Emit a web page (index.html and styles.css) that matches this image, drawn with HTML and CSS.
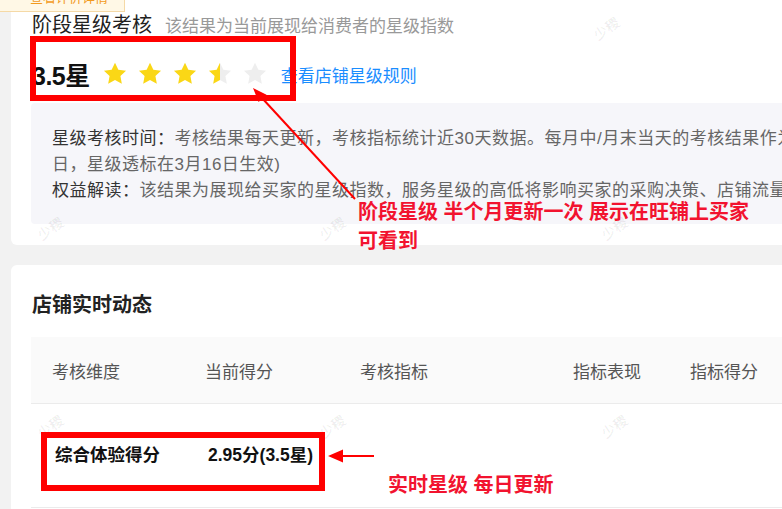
FILE: index.html
```html
<!doctype html>
<html lang="zh-CN">

<head>
    <meta charset="utf-8">
    <title>店铺星级</title>
    <meta name="viewport" content="width=device-width, initial-scale=1">
    <link rel="stylesheet" href="styles.css">
</head>

<body>
    <div class="page">
        <div class="tag">查看评价详情</div>

        <section class="card card--stage">
            <div class="stage-head">
                <h2>阶段星级考核</h2>
                <span class="stage-head__sub">该结果为当前展现给消费者的星级指数</span>
            </div>
            <div class="stage-score">
                <span class="stage-score__num">3.5星</span>
                <div class="stars">
                    <svg class="star" viewBox="0 0 24 24"><path class="star--on" d="M12 1.6l3.1 6.5 7.1.9-5.2 4.9 1.3 7.1L12 17.6l-6.3 3.4 1.3-7.1-5.2-4.9 7.1-.9z"/></svg>
                    <svg class="star" viewBox="0 0 24 24"><path class="star--on" d="M12 1.6l3.1 6.5 7.1.9-5.2 4.9 1.3 7.1L12 17.6l-6.3 3.4 1.3-7.1-5.2-4.9 7.1-.9z"/></svg>
                    <svg class="star" viewBox="0 0 24 24"><path class="star--on" d="M12 1.6l3.1 6.5 7.1.9-5.2 4.9 1.3 7.1L12 17.6l-6.3 3.4 1.3-7.1-5.2-4.9 7.1-.9z"/></svg>
                    <svg class="star" viewBox="0 0 24 24">
                        <defs>
                            <linearGradient id="half">
                                <stop offset="50%" stop-color="#fad716"/>
                                <stop offset="50%" stop-color="#eeeeee"/>
                            </linearGradient>
                        </defs>
                        <path fill="url(#half)" d="M12 1.6l3.1 6.5 7.1.9-5.2 4.9 1.3 7.1L12 17.6l-6.3 3.4 1.3-7.1-5.2-4.9 7.1-.9z"/>
                    </svg>
                    <svg class="star" viewBox="0 0 24 24"><path class="star--off" d="M12 1.6l3.1 6.5 7.1.9-5.2 4.9 1.3 7.1L12 17.6l-6.3 3.4 1.3-7.1-5.2-4.9 7.1-.9z"/></svg>
                </div>
                <a class="stage-score__link" href="javascript:void(0)">查看店铺星级规则</a>
            </div>
            <div class="stage-info">
                <p><b>星级考核时间：</b>考核结果每天更新，考核指标统计近30天数据。每月中/月末当天的考核结果作为下半个月的星级，次月1</p>
                <p>日，星级透标在3月16日生效)</p>
                <p><b>权益解读：</b>该结果为展现给买家的星级指数，服务星级的高低将影响买家的采购决策、店铺流量的分配</p>
            </div>
        </section>

        <section class="card card--live">
            <h2 class="live-title">店铺实时动态</h2>
            <div class="live-table">
                <div class="live-row live-row--head">
                    <span>考核维度</span>
                    <span>当前得分</span>
                    <span>考核指标</span>
                    <span>指标表现</span>
                    <span>指标得分</span>
                </div>
                <div class="live-row live-row--body">
                    <span>综合体验得分</span>
                    <span>2.95分(3.5星)</span>
                    <span></span>
                    <span></span>
                    <span></span>
                </div>
            </div>
        </section>

        <!-- 标注 -->
        <div class="mark mark--stage"></div>
        <div class="mark mark--live"></div>
        <p class="note note--stage">阶段星级 半个月更新一次 展示在旺铺上买家<br>可看到</p>
        <p class="note note--live">实时星级 每日更新</p>
        <svg class="arrows" width="782" height="509" viewBox="0 0 782 509">
            <line x1="355" y1="199" x2="262" y2="98" stroke="#ff0000" stroke-width="2"/>
            <polygon points="253,88 266.5,94.8 258.6,102" fill="#ff0000"/>
            <line x1="374" y1="456" x2="341" y2="456" stroke="#ff0000" stroke-width="2"/>
            <polygon points="328,456 343,449.5 343,462.5" fill="#ff0000"/>
        </svg>

        <span class="wm wm--1">少稷</span>
        <span class="wm wm--2">少稷</span>
        <span class="wm wm--3">少稷</span>
        <span class="wm wm--4">少稷</span>
        <span class="wm wm--5">少稷</span>
        <span class="wm wm--6">少稷</span>
        <span class="wm wm--7">少稷</span>
    </div>
</body>

</html>
```

FILE: styles.css
```css
* {
    padding: 0;
    margin: 0;
    box-sizing: border-box;
}

html,
body {
    width: 782px;
    height: 509px;
    overflow: hidden;
}

body {
    background-color: #f2f2f2;
    font-family: "Liberation Sans", "Noto Sans CJK SC", sans-serif;
    color: #333;
}

.page {
    position: relative;
    width: 782px;
    height: 509px;
    padding-left: 11px;
}

.card {
    width: 1000px;
    background-color: #fff;
    border-radius: 6px;
    padding: 0 20px;
}

.tag {
    position: absolute;
    top: -11px;
    left: -1px;
    width: 126px;
    height: 23px;
    padding-left: 30px;
    background-color: #fff8e6;
    border: 1px solid #f5d9a6;
    color: #f29a1c;
    font-size: 13px;
    line-height: 16px;
    z-index: 2;
}

/* 阶段星级 */
.card--stage {
    padding-top: 13px;
    padding-bottom: 21px;
    border-radius: 0 0 6px 6px;
}

.stage-head {
    display: flex;
    align-items: baseline;
    padding-left: 1px;
    line-height: 24px;
}

.stage-head h2 {
    font-size: 20px;
    font-weight: normal;
    color: #222;
}

.stage-head__sub {
    margin-left: 13px;
    font-size: 17px;
    color: #999;
}

.stage-score {
    display: flex;
    align-items: center;
    height: 32px;
    margin-top: 19px;
    padding-left: 1px;
}

.stage-score__num {
    font-size: 25px;
    font-weight: bold;
    color: #111;
    letter-spacing: -0.5px;
}

.stars {
    display: flex;
    gap: 9px;
    margin-left: 12px;
}

.star {
    width: 26px;
    height: 26px;
}

.star--on {
    fill: #fad716;
}

.star--off {
    fill: #eeeeee;
}

.stage-score__link {
    margin-left: 13px;
    font-size: 17px;
    color: #1a8dff;
    text-decoration: none;
}

.stage-info {
    margin-top: 13px;
    padding: 23px 21px 20px;
    background-color: #f6f6fa;
    border-radius: 4px;
    font-size: 17px;
    line-height: 26px;
    letter-spacing: 0.5px;
    color: #666;
}

.stage-info p {
    white-space: nowrap;
}

.stage-info b {
    font-weight: normal;
    color: #333;
}

/* 实时动态 */
.card--live {
    margin-top: 20px;
    padding-top: 27px;
    height: 300px;
}

.live-title {
    padding-left: 1px;
    font-size: 20px;
    line-height: 26px;
    color: #222;
}

.live-table {
    margin-top: 19px;
}

.live-row {
    display: grid;
    grid-template-columns: 153px 155px 213px 117px 1fr;
    align-items: center;
    padding-left: 21px;
    border-bottom: 1px solid #ebebeb;
    font-size: 17px;
}

.live-row--head {
    height: 67px;
    background-color: #fafafa;
    color: #555;
}

.live-row--body {
    height: 104px;
    padding-left: 24px;
    padding-bottom: 4px;
    font-size: 17.5px;
    font-weight: bold;
    color: #111;
}

/* 标注 */
.mark {
    position: absolute;
    border: 6px solid #ff0000;
    z-index: 3;
}

.mark--stage {
    left: 30px;
    top: 36px;
    width: 266px;
    height: 65px;
}

.mark--live {
    left: 41px;
    top: 432px;
    width: 284px;
    height: 59px;
}

.note {
    position: absolute;
    color: #f2132f;
    font-size: 20px;
    font-weight: bold;
    line-height: 29px;
    white-space: nowrap;
    z-index: 3;
}

.note--stage {
    left: 358px;
    top: 198px;
}

.note--live {
    left: 388px;
    top: 471px;
}

.arrows {
    position: absolute;
    left: 0;
    top: 0;
    pointer-events: none;
    z-index: 3;
}

.wm {
    position: absolute;
    transform: rotate(-35deg);
    color: rgba(0, 0, 0, 0.06);
    font-size: 14px;
    font-weight: bold;
    z-index: 1;
}

.wm--1 { left: 592px; top: 18px; }
.wm--2 { left: 36px; top: 218px; }
.wm--3 { left: 318px; top: 218px; }
.wm--4 { left: 600px; top: 218px; }
.wm--5 { left: 36px; top: 416px; }
.wm--6 { left: 318px; top: 416px; }
.wm--7 { left: 600px; top: 416px; }
```
